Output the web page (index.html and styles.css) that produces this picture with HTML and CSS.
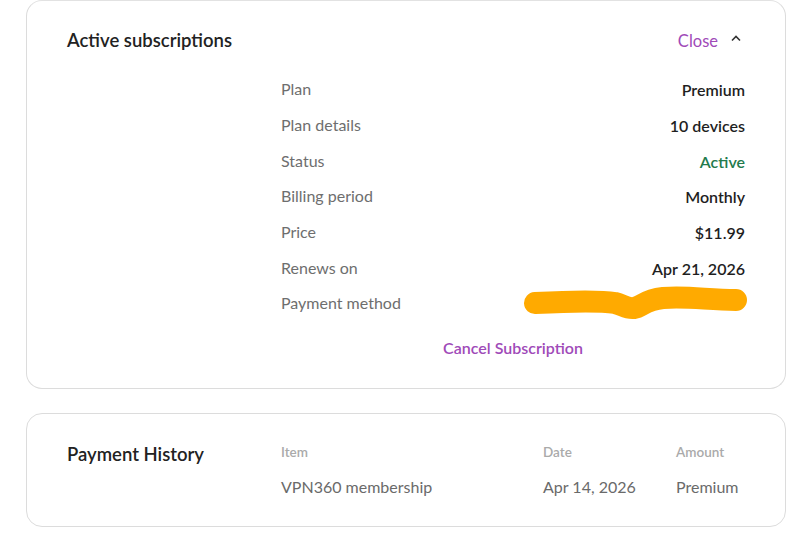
FILE: index.html
```html
<!DOCTYPE html>
<html lang="en">

<head>
    <meta charset="UTF-8">
    <meta name="viewport" content="width=device-width, initial-scale=1.0">
    <title>Subscriptions</title>
    <link rel="stylesheet" href="styles.css">
</head>

<body>
    <div class="page">
        <section class="card subscriptions">
            <div class="card-head">
                <h2>Active subscriptions</h2>
                <button class="toggle">Close
                    <svg class="caret" width="12" height="8" viewBox="0 0 12 8">
                        <path d="M2 6.5 L6 2.5 L10 6.5" fill="none" stroke="#333" stroke-width="1.6" />
                    </svg>
                </button>
            </div>
            <div class="details">
                <div class="row"><span class="label">Plan</span><span class="value">Premium</span></div>
                <div class="row"><span class="label">Plan details</span><span class="value">10 devices</span></div>
                <div class="row"><span class="label">Status</span><span class="value active">Active</span></div>
                <div class="row"><span class="label">Billing period</span><span class="value">Monthly</span></div>
                <div class="row"><span class="label">Price</span><span class="value">$11.99</span></div>
                <div class="row"><span class="label">Renews on</span><span class="value">Apr 21, 2026</span></div>
                <div class="row">
                    <span class="label">Payment method</span>
                    <span class="value">
                        <!-- card number scribbled out -->
                        <svg class="scribble" width="226" height="36" viewBox="0 0 226 36">
                            <path d="M12 17 C50 15 80 15 92 17 C100 19 104 23 111 22 C119 21 121 14 140 12 C165 10 185 14 213 14"
                                fill="none" stroke="#ffaa00" stroke-width="22" stroke-linecap="round" />
                        </svg>
                    </span>
                </div>
                <a class="cancel" href="#">Cancel Subscription</a>
            </div>
        </section>

        <section class="card history">
            <h2>Payment History</h2>
            <div class="history-table">
                <span class="th">Item</span>
                <span class="th">Date</span>
                <span class="th">Amount</span>
                <span class="td">VPN360 membership</span>
                <span class="td">Apr 14, 2026</span>
                <span class="td">Premium</span>
            </div>
        </section>
    </div>
</body>

</html>
```

FILE: styles.css
```css
body {
    margin: 0;
    font-family: Lato, "Open Sans", sans-serif;
    color: #1f1f1f;
    background: #fff;
}

.page {
    padding: 0 14px 0 26px;
}

.card {
    border: 1px solid #dcdcdc;
    border-radius: 16px;
    margin-bottom: 24px;
}

h2 {
    margin: 0;
    font-size: 18.5px;
    font-weight: 600;
    color: #222;
}

/* active subscriptions */

.subscriptions {
    padding: 22px 40px 28px 40px;
    border-top-color: #e2e2e2;
}

.card-head {
    display: flex;
    justify-content: space-between;
    align-items: center;
    height: 36px;
}

.card-head h2 {
    margin-top: -2px;
}

.toggle {
    display: flex;
    align-items: center;
    gap: 12px;
    border: none;
    background: none;
    padding: 0 3px 0 0;
    font-family: inherit;
    font-size: 16.5px;
    color: #a04ab8;
    cursor: pointer;
}

.caret {
    margin-top: -6px;
}

.details {
    margin: 13px 0 0 214px;
}

.row {
    display: flex;
    justify-content: space-between;
    align-items: center;
    height: 35.7px;
}

.label {
    font-size: 16px;
    color: #6e6e6e;
    margin-top: -2px;
}

.value {
    font-size: 16px;
    font-weight: 600;
    color: #1f1f1f;
}

.value.active {
    color: #227a4c;
}

.scribble {
    display: block;
    margin-right: -4px;
}

.cancel {
    display: block;
    margin-top: 14px;
    line-height: 24px;
    text-align: center;
    font-size: 16px;
    font-weight: 600;
    color: #a04ab8;
    text-decoration: none;
}

/* payment history */

.history {
    display: grid;
    grid-template-columns: 214px 1fr;
    padding: 26px 40px 27px 40px;
}

.history h2 {
    line-height: 24px;
    margin-top: 2px;
}

.history-table {
    display: grid;
    grid-template-columns: 262px 133px 1fr;
    row-gap: 11px;
}

.th {
    font-size: 13.5px;
    font-weight: 600;
    color: #aaa;
    line-height: 24px;
}

.td {
    font-size: 16px;
    color: #6a6a6a;
    line-height: 24px;
}
```
